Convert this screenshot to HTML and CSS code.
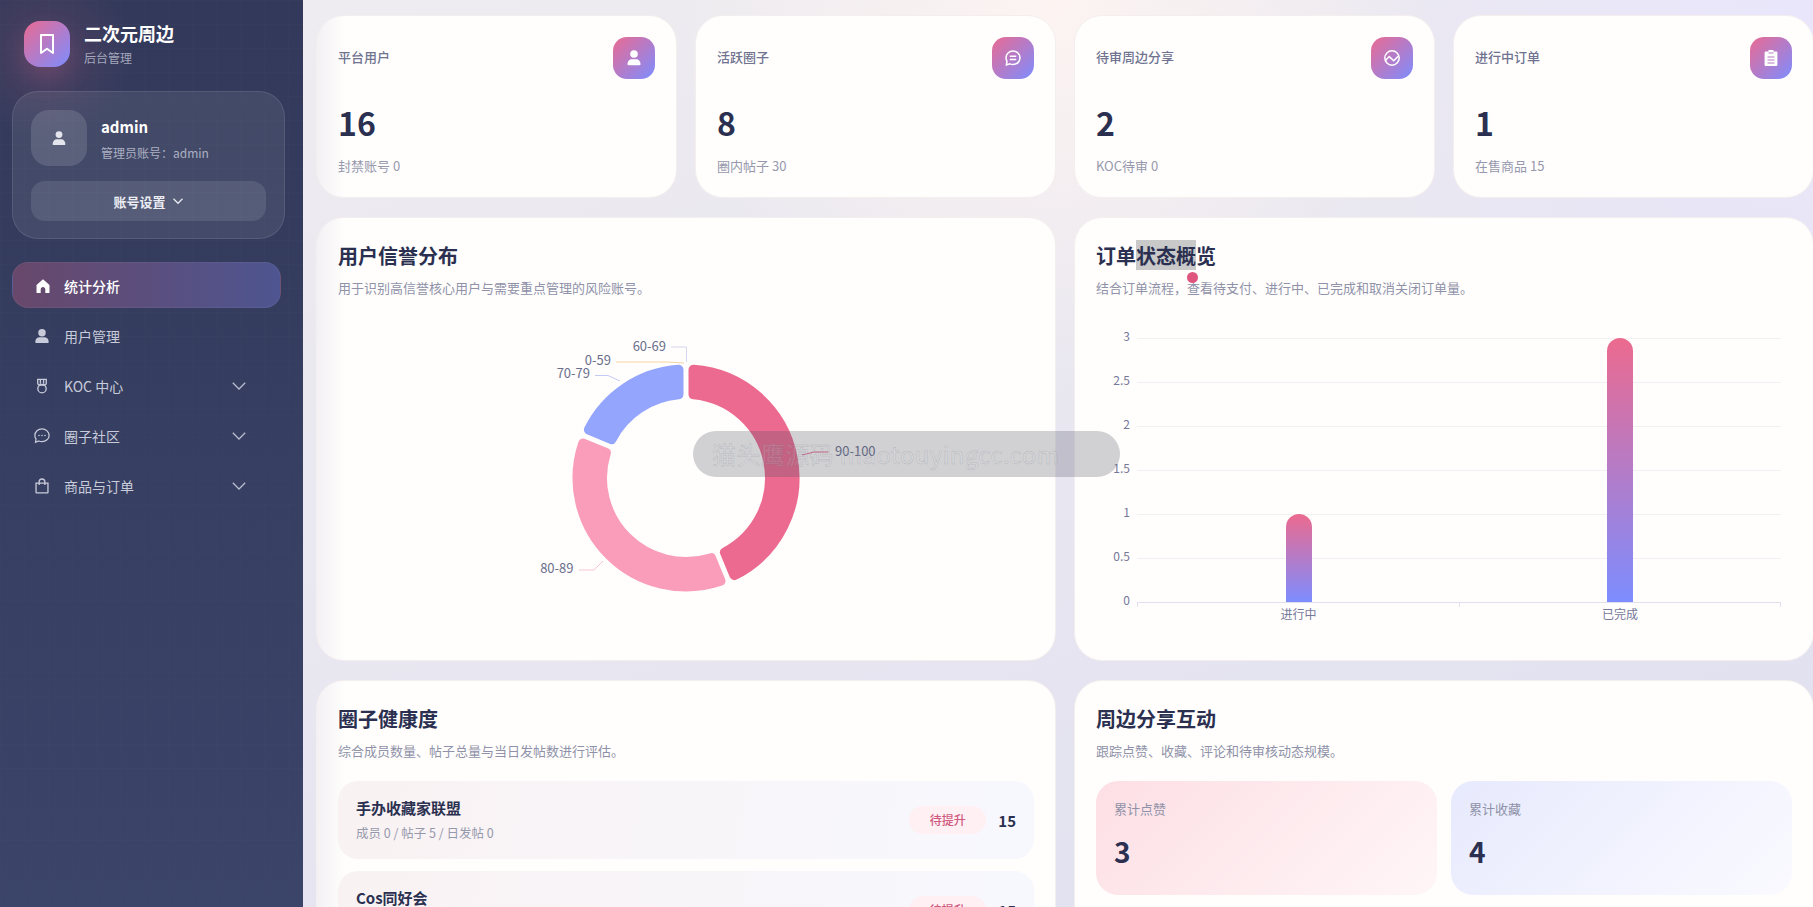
FILE: index.html
```html
<!DOCTYPE html>
<html lang="zh-CN">
<head>
    <meta charset="UTF-8">
    <meta name="viewport" content="width=device-width, initial-scale=1.0">
    <title>二次元周边后台管理</title>
    <link rel="stylesheet" href="styles.css">
</head>
<body>
    <aside class="sidebar">
        <div class="brand">
            <div class="brand-logo">
                <svg width="24" height="24" viewBox="0 0 24 24" fill="none" stroke="#fff" stroke-width="2"><path d="M6 3h12v18l-6-4.2L6 21z" stroke-linejoin="round"/></svg>
            </div>
            <div>
                <div class="brand-name">二次元周边</div>
                <div class="brand-sub">后台管理</div>
            </div>
        </div>

        <div class="user-card">
            <div class="user-row">
                <div class="avatar">
                    <svg width="16" height="16" viewBox="0 0 16 16" fill="#e4e5ec"><circle cx="8" cy="4.6" r="3.4"/><path d="M1.6 14.2c0-3 2-5 4-5h4.8c2 0 4 2 4 5 0 .5-.4.8-.8.8H2.400c-.4 0-.8-.3-.8-.8z"/></svg>
                </div>
                <div>
                    <div class="user-name">admin</div>
                    <div class="user-role">管理员账号：admin</div>
                </div>
            </div>
            <button class="user-btn">账号设置
                <svg width="12" height="12" viewBox="0 0 12 12" fill="none" stroke="#e6e7ee" stroke-width="1.3"><path d="M1.5 3.800 6 8.300l4.500-4.500"/></svg>
            </button>
        </div>

        <nav class="nav">
            <a class="nav-item active">
                <svg class="nav-icon" viewBox="0 0 18 18" fill="#fff"><path d="M9 1.500 1.700 8v8.200c0 .5.400.8.800.8h3.900v-4.200c0-1.400 1.200-2.600 2.600-2.600s2.600 1.200 2.600 2.600V17h3.900c.4 0 .8-.3.8-.8V8z"/></svg>
                <span>统计分析</span>
            </a>
            <a class="nav-item">
                <svg class="nav-icon" viewBox="0 0 18 18" fill="#c8cbd9"><circle cx="9" cy="5.300" r="4.200"/><path d="M1.600 15c0-3 2.400-4.600 4.600-4.600h5.600c2.200 0 4.600 1.600 4.600 4.600v.9c0 .6-.5 1.100-1.100 1.100H2.700c-.6 0-1.100-.5-1.100-1.100z"/></svg>
                <span>用户管理</span>
            </a>
            <a class="nav-item">
                <svg class="nav-icon" viewBox="0 0 18 18" fill="none" stroke="#c8cbd9" stroke-width="1.5"><path d="M4.200 1.500h9.600v5.200l-2 1.200H6.200l-2-1.200zM7.200 1.500v5M10.800 1.500v5"/><circle cx="9" cy="12" r="4.700"/></svg>
                <span>KOC 中心</span>
                <svg class="nav-arrow" viewBox="0 0 14 14" fill="none" stroke="#b9bdd0" stroke-width="1.3"><path d="M.8 3.800 7 10l6.200-6.200"/></svg>
            </a>
            <a class="nav-item">
                <svg class="nav-icon" viewBox="0 0 18 18" fill="none" stroke="#c8cbd9" stroke-width="1.4"><path d="M9 1C4.600 1 1 4.200 1 8.300c0 1.500.5 2.900 1.300 4l-.6 3.700 3.700-1.400c1.100.5 2.300.8 3.600.8 4.400 0 8-3.200 8-7.100S13.400 1 9 1z"/><circle cx="5.600" cy="8.400" r=".9" fill="#c8cbd9" stroke="none"/><circle cx="9" cy="8.400" r=".9" fill="#c8cbd9" stroke="none"/><circle cx="12.400" cy="8.400" r=".9" fill="#c8cbd9" stroke="none"/></svg>
                <span>圈子社区</span>
                <svg class="nav-arrow" viewBox="0 0 14 14" fill="none" stroke="#b9bdd0" stroke-width="1.3"><path d="M.8 3.800 7 10l6.200-6.200"/></svg>
            </a>
            <a class="nav-item">
                <svg class="nav-icon" viewBox="0 0 18 18" fill="none" stroke="#c8cbd9" stroke-width="1.5"><path d="M2.300 5.800h13.400V16a.8.8 0 0 1-.8.8H3.100a.8.8 0 0 1-.8-.8z"/><path d="M5.800 8V4.300a3.200 3.200 0 0 1 6.400 0V8"/></svg>
                <span>商品与订单</span>
                <svg class="nav-arrow" viewBox="0 0 14 14" fill="none" stroke="#b9bdd0" stroke-width="1.3"><path d="M.8 3.800 7 10l6.200-6.200"/></svg>
            </a>
        </nav>
    </aside>

    <main class="main">
        <section class="stats">
            <div class="card stat edge">
                <div class="stat-head">
                    <span class="stat-label">平台用户</span>
                    <div class="stat-icon">
                        <svg width="18" height="18" viewBox="0 0 18 18" fill="#fff"><circle cx="9" cy="5" r="3.800"/><path d="M2.500 15c0-3 2.200-4.800 4.300-4.800h4.400c2.100 0 4.300 1.800 4.300 4.800 0 .8-.5 1.200-1.100 1.200H3.600c-.6 0-1.100-.4-1.100-1.200z"/></svg>
                    </div>
                </div>
                <div class="stat-num">16</div>
                <div class="stat-sub">封禁账号 0</div>
            </div>
            <div class="card stat">
                <div class="stat-head">
                    <span class="stat-label">活跃圈子</span>
                    <div class="stat-icon">
                        <svg width="18" height="18" viewBox="0 0 18 18" fill="none" stroke="#fff" stroke-width="1.5"><path d="M9 2c-3.900 0-7 3-7 6.800 0 1.300.4 2.500 1 3.500L2.400 16l3.500-1.100c1 .5 2 .7 3.100.7 3.900 0 7-3 7-6.800S12.900 2 9 2z"/><path d="M5.800 7.300h6.400M5.800 10.500h6.400"/></svg>
                    </div>
                </div>
                <div class="stat-num">8</div>
                <div class="stat-sub">圈内帖子 30</div>
            </div>
            <div class="card stat">
                <div class="stat-head">
                    <span class="stat-label">待审周边分享</span>
                    <div class="stat-icon">
                        <svg width="18" height="18" viewBox="0 0 18 18" fill="none" stroke="#fff" stroke-width="1.5"><circle cx="9" cy="9" r="7.200"/><path d="M2.500 11.500 6.200 7.600l4.600 4.200 4.900-5"/></svg>
                    </div>
                </div>
                <div class="stat-num">2</div>
                <div class="stat-sub">KOC待审 0</div>
            </div>
            <div class="card stat">
                <div class="stat-head">
                    <span class="stat-label">进行中订单</span>
                    <div class="stat-icon">
                        <svg width="18" height="18" viewBox="0 0 18 18"><path fill="#fff" d="M6.500 1h5v1.600h3c.5 0 .9.400.9.900v12.600c0 .5-.4.900-.9.900h-11c-.5 0-.9-.4-.9-.9V3.500c0-.5.400-.9.900-.9h3z"/><path stroke="#b57ec0" stroke-width="1.2" d="M5.500 8h7M5.500 11h7M5.500 14h7M6.500 4h5"/></svg>
                    </div>
                </div>
                <div class="stat-num">1</div>
                <div class="stat-sub">在售商品 15</div>
            </div>
        </section>

        <section class="panels">
            <div class="card panel edge">
                <h3>用户信誉分布</h3>
                <p class="desc">用于识别高信誉核心用户与需要重点管理的风险账号。</p>
                <svg class="chart" viewBox="0 0 696 320">
                    <g transform="translate(348 160)" stroke-width="10" stroke-linejoin="round">
                        <path fill="#ec6a8f" stroke="#ec6a8f" d="M7.500 -108.240A108.500 108.500 0 0 1 48.350 97.130L38.940 74.430A84 84 0 0 0 7.500 -83.660Z"/>
                        <path fill="#f99dbb" stroke="#f99dbb" d="M34.500 102.870A108.500 108.500 0 0 1 -102.870 -34.500L-80.170 -25.090A84 84 0 0 0 25.090 80.170Z"/>
                        <path fill="#94a5fd" stroke="#94a5fd" d="M-97.130 -48.350A108.500 108.500 0 0 1 -7.500 -108.240L-7.500 -83.660A84 84 0 0 0 -74.430 -38.940Z"/>
                    </g>
                    <g fill="none">
                        <path stroke="#d3d6ec" d="M333 29h15.500v15"/>
                        <path stroke="#f6d3a3" d="M278 44h52l16 1"/>
                        <path stroke="#c3cbf5" d="M257 57.500h13L282 63"/>
                        <path stroke="#f9c5d5" d="M241 252h15l9-9"/>
                        <path stroke="#ec6a8f" d="M490.600 134H476l-12 3"/>
                    </g>
                    <g class="pie-label">
                        <text x="328" y="33" text-anchor="end">60-69</text>
                        <text x="273" y="47" text-anchor="end">0-59</text>
                        <text x="252" y="60" text-anchor="end">70-79</text>
                        <text x="235.500" y="255" text-anchor="end">80-89</text>
                        <text x="497" y="138">90-100</text>
                    </g>
                </svg>
            </div>

            <div class="card panel">
                <h3>订单<span class="picked">状态概</span>览</h3>
                <p class="desc">结合订单流程，查看待支付、进行中、已完成和取消关闭订单量。</p>
                <svg class="chart" viewBox="0 0 696 320">
                    <defs>
                        <linearGradient id="barFill" x1="0" y1="0" x2="0" y2="1">
                            <stop offset="0" stop-color="#ec6a8f"/>
                            <stop offset="1" stop-color="#7d8dff"/>
                        </linearGradient>
                    </defs>
                    <g stroke="#f0f0f5">
                        <path d="M41 20.500h644M41 64.500h644M41 108.500h644M41 152.500h644M41 196.500h644M41 240.500h644"/>
                    </g>
                    <path stroke="#dfe0ee" fill="none" d="M41 284.500h644M41.500 284v5M363.500 284v5M684.500 284v5"/>
                    <path fill="url(#barFill)" d="M190 284V209a13 13 0 0 1 26 0v75z"/>
                    <path fill="url(#barFill)" d="M511 284V33a13 13 0 0 1 26 0v251z"/>
                    <g class="axis-label" text-anchor="end">
                        <text x="34" y="23">3</text>
                        <text x="34" y="67">2.5</text>
                        <text x="34" y="111">2</text>
                        <text x="34" y="155">1.5</text>
                        <text x="34" y="199">1</text>
                        <text x="34" y="243">0.5</text>
                        <text x="34" y="287">0</text>
                    </g>
                    <g class="axis-label" text-anchor="middle">
                        <text x="202.500" y="301">进行中</text>
                        <text x="524" y="301">已完成</text>
                    </g>
                </svg>
            </div>

            <div class="card panel edge">
                <h3>圈子健康度</h3>
                <p class="desc">综合成员数量、帖子总量与当日发帖数进行评估。</p>
                <div class="health-list">
                    <div class="health-item">
                        <div>
                            <div class="health-name">手办收藏家联盟</div>
                            <div class="health-sub">成员 0 / 帖子 5 / 日发帖 0</div>
                        </div>
                        <div class="health-right">
                            <span class="pill">待提升</span>
                            <span class="health-score">15</span>
                        </div>
                    </div>
                    <div class="health-item">
                        <div>
                            <div class="health-name">Cos同好会</div>
                            <div class="health-sub">成员 0 / 帖子 5 / 日发帖 0</div>
                        </div>
                        <div class="health-right">
                            <span class="pill">待提升</span>
                            <span class="health-score">15</span>
                        </div>
                    </div>
                </div>
            </div>

            <div class="card panel">
                <h3>周边分享互动</h3>
                <p class="desc">跟踪点赞、收藏、评论和待审核动态规模。</p>
                <div class="share-grid">
                    <div class="share-box pink">
                        <div class="share-label">累计点赞</div>
                        <div class="share-num">3</div>
                    </div>
                    <div class="share-box blue">
                        <div class="share-label">累计收藏</div>
                        <div class="share-num">4</div>
                    </div>
                </div>
            </div>
        </section>
    </main>

    <div class="cursor-dot"></div>
    <div class="watermark">猫头鹰源码 maotouyingcc.com</div>
</body>
</html>
```

FILE: styles.css
```css
* {
    box-sizing: border-box;
}
html, body {
    height: 100%;
}
body {
    margin: 0;
    display: flex;
    overflow: hidden;
    font-family: "Noto Sans CJK SC", "Noto Sans", sans-serif;
    color: #2b3050;
    background:
        radial-gradient(circle at 100% 0, #e9e6fc 0, rgba(233, 230, 252, 0) 480px),
        radial-gradient(circle at 58% 0, #fdf4f2 0, rgba(253, 244, 242, 0) 380px),
        linear-gradient(160deg, #efedf0 0%, #e8e6f0 55%, #dfdff0 100%);
}
.sidebar {
    flex: 0 0 303px;
    width: 303px;
    height: 100%;
    padding: 20px 0 0 12px;
    background-color: #3a4266;
    background-image:
        linear-gradient(rgba(255, 255, 255, 0.008) 1px, transparent 1px),
        linear-gradient(90deg, rgba(255, 255, 255, 0.008) 1px, transparent 1px),
        radial-gradient(circle at 45px 50px, rgba(236, 106, 143, 0.14), rgba(236, 106, 143, 0) 90px),
        linear-gradient(180deg, #32395a 0%, #3b4469 100%);
    background-size: 24px 24px, 24px 24px, 100% 100%, 100% 100%;
}
.brand {
    display: flex;
    align-items: center;
    gap: 14px;
    padding-left: 12px;
}
.brand-logo {
    width: 46px;
    height: 46px;
    border-radius: 16px;
    display: flex;
    align-items: center;
    justify-content: center;
    background: linear-gradient(135deg, #ea6a92, #7d8dff);
    box-shadow: 0 12px 26px rgba(236, 106, 143, 0.2);
}
.brand-name {
    font-size: 18px;
    font-weight: 700;
    line-height: 26px;
    color: #fff;
}
.brand-sub {
    margin-top: 3px;
    font-size: 12px;
    line-height: 18px;
    color: #a3a7bb;
}
.user-card {
    margin-top: 24px;
    width: 273px;
    height: 148px;
    padding: 18px;
    border-radius: 26px;
    background: rgba(255, 255, 255, 0.08);
    border: 1px solid rgba(255, 255, 255, 0.1);
}
.user-row {
    display: flex;
    align-items: center;
    gap: 14px;
}
.avatar {
    width: 56px;
    height: 56px;
    border-radius: 18px;
    display: flex;
    align-items: center;
    justify-content: center;
    background: rgba(255, 255, 255, 0.13);
}
.user-name {
    margin-top: 3px;
    font-size: 15px;
    font-weight: 700;
    line-height: 22px;
    color: #fff;
}
.user-role {
    margin-top: 5px;
    font-size: 12px;
    line-height: 20px;
    color: #acb0c3;
}
.user-btn {
    width: 100%;
    height: 40px;
    margin-top: 15px;
    border: none;
    border-radius: 14px;
    font-family: inherit;
    font-size: 13px;
    font-weight: 700;
    color: #ecedf3;
    display: flex;
    align-items: center;
    justify-content: center;
    gap: 6px;
    background: rgba(255, 255, 255, 0.1);
}
.nav {
    margin-top: 23px;
    width: 269px;
    display: flex;
    flex-direction: column;
    gap: 4px;
}
.nav-item {
    height: 46px;
    padding: 2px 35px 0 22px;
    border-radius: 16px;
    display: flex;
    align-items: center;
    font-size: 14px;
    color: #c8cbd9;
}
.nav-item.active {
    color: #fff;
    font-weight: 500;
    background: linear-gradient(90deg, #68486b, #4e5590);
    border: 1px solid rgba(255, 255, 255, 0.05);
}
.nav-icon {
    width: 16px;
    height: 16px;
    margin-right: 14px;
}
.nav-item.active .nav-icon {
    margin-right: 13px;
}
.nav-arrow {
    width: 14px;
    height: 14px;
    margin-left: auto;
}
.main {
    flex: 1;
    min-width: 0;
    height: 100%;
    padding: 15px 0 0 13px;
    overflow: hidden;
}
.card {
    background: #fffefd;
    border: 1px solid #f5eeef;
    border-radius: 28px;
}
.edge {
    background: linear-gradient(90deg, #f3f1f4 0, #fffefd 28px);
}
.stats {
    display: grid;
    grid-template-columns: repeat(4, 361px);
    gap: 18px;
}
.stat {
    padding: 21px;
}
.stat-head {
    display: flex;
    justify-content: space-between;
    align-items: center;
}
.stat-label {
    margin-top: -3px;
    font-size: 13px;
    font-weight: 500;
    color: #6f7390;
}
.stat-icon {
    width: 42px;
    height: 42px;
    border-radius: 14px;
    display: flex;
    align-items: center;
    justify-content: center;
    background: linear-gradient(135deg, #ea6a92, #7d8dff);
}
.stat-num {
    margin-top: 20px;
    font-size: 32px;
    font-weight: 700;
    line-height: 46px;
    color: #2b3050;
}
.stat-sub {
    margin-top: 11px;
    font-size: 13px;
    line-height: 20px;
    color: #9699ac;
}
.panels {
    display: grid;
    grid-template-columns: 1fr 1fr;
    gap: 19px 18px;
    margin-top: 19px;
}
.panel {
    padding: 23px 21px 22px;
}
.panel h3 {
    margin: 0;
    font-size: 20px;
    font-weight: 700;
    line-height: 30px;
    color: #2b3050;
}
.picked {
    padding-top: 1px;
    background: #c9c9c9;
}
.desc {
    margin: 7px 0 0;
    font-size: 13px;
    line-height: 20px;
    color: #8f92a8;
}
.chart {
    display: block;
    width: 696px;
    height: 320px;
    margin-top: 20px;
}
.pie-label text {
    font-size: 13px;
    fill: #6b6f8c;
}
.axis-label text {
    font-size: 12px;
    fill: #75789a;
}
.health-list {
    margin-top: 20px;
    display: flex;
    flex-direction: column;
    gap: 12px;
}
.health-item {
    height: 78px;
    padding: 0 18px;
    border-radius: 20px;
    display: flex;
    align-items: center;
    justify-content: space-between;
    background: linear-gradient(100deg, #f9f2f3, #f7f8fe);
}
.health-name {
    font-size: 15px;
    font-weight: 700;
    line-height: 22px;
    color: #2b3050;
}
.health-sub {
    margin-top: 4px;
    font-size: 12.5px;
    line-height: 20px;
    color: #9699ac;
}
.health-right {
    display: flex;
    align-items: center;
    gap: 12px;
}
.pill {
    width: 77px;
    height: 28px;
    border-radius: 14px;
    font-size: 12px;
    font-weight: 500;
    line-height: 28px;
    text-align: center;
    color: #cf5a80;
    background: #fff0f3;
}
.health-score {
    font-size: 15px;
    font-weight: 700;
    color: #2b3050;
}
.share-grid {
    margin-top: 20px;
    display: grid;
    grid-template-columns: 1fr 1fr;
    gap: 14px;
}
.share-box {
    height: 114px;
    padding: 18px 18px;
    border-radius: 22px;
}
.share-box.pink {
    background: linear-gradient(135deg, #fddfe5, #fff6f7);
}
.share-box.blue {
    background: linear-gradient(135deg, #e7eafd, #fafaff);
}
.share-label {
    font-size: 13px;
    line-height: 20px;
    color: #8f92a8;
}
.share-num {
    margin-top: 12px;
    font-size: 28px;
    font-weight: 700;
    line-height: 40px;
    color: #2b3050;
}
/* recording overlays */
.cursor-dot {
    position: absolute;
    left: 1187px;
    top: 272px;
    width: 11px;
    height: 11px;
    border-radius: 50%;
    background: #df557e;
}
.watermark {
    position: absolute;
    left: 693px;
    top: 431px;
    width: 427px;
    height: 46px;
    padding-left: 19px;
    border-radius: 23px;
    font-size: 24px;
    letter-spacing: 0.4px;
    line-height: 46px;
    white-space: nowrap;
    color: rgba(255, 255, 255, 0.12);
    -webkit-text-stroke: 0.5px rgba(120, 122, 135, 0.35);
    background: rgba(70, 74, 92, 0.25);
}
```
